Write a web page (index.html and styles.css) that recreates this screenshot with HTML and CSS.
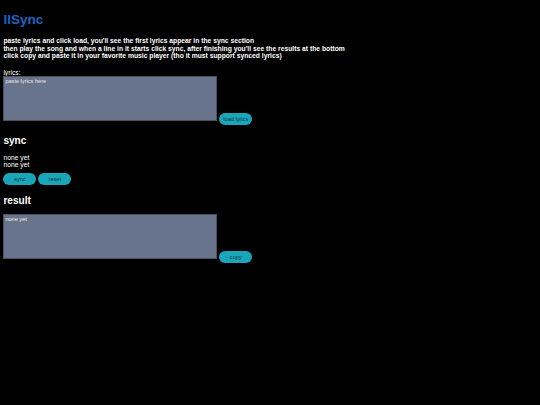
FILE: index.html
```html
<!DOCTYPE html>
<html lang="en">
<head>
<meta charset="utf-8">
<title>llSync</title>
<link rel="stylesheet" href="styles.css">
</head>
<body>
<h1 class="title">llSync</h1>
<h4 class="intro">paste lyrics and click load, you'll see the first lyrics appear in the sync section<br>then play the song and when a line in it starts click sync, after finishing you'll see the results at the bottom<br>click copy and paste it in your favorite music player (tho it must support synced lyrics)</h4>
<label class="label" for="lyrics">lyrics:</label><br>
<textarea class="box" id="lyrics" placeholder="paste lyrics here"></textarea>
<button class="btn">load lyrics</button>
<h2 class="section">sync</h2>
<div class="line">none yet</div>
<div class="line">none yet</div>
<div class="controls"><button class="btn">sync</button> <button class="btn">reset</button></div>
<h2 class="section">result</h2>
<textarea class="box" readonly>none yet</textarea>
<button class="btn">copy</button>
</body>
</html>
```

FILE: styles.css
```css
html {
  background: #000;
}
body {
  margin: 3.375px;
  background: #000;
  color: #fff;
  font-family: "Liberation Sans", Arial, sans-serif;
  font-size: 6.75px;
}
.title {
  color: #1c66c4;
  font-size: 13.5px;
  margin: 9.05px 0 10px;
}
.intro {
  font-size: 6.75px;
  font-weight: bold;
  line-height: 7.5px;
  margin: 10px 0 9.5px;
}
.label {
  font-size: 6.75px;
}
.box {
  box-sizing: border-box;
  width: 214px;
  height: 45px;
  margin: 0;
  padding: 1px;
  background: #68748b;
  color: #f0f0f0;
  border: 0.5px solid #4a5262;
  font-family: "Liberation Sans", Arial, sans-serif;
  font-size: 5.6px;
  resize: none;
  vertical-align: baseline;
}
.box::placeholder {
  color: #e6e8ee;
}
.btn {
  box-sizing: border-box;
  width: 33px;
  height: 12px;
  padding: 0;
  border: none;
  border-radius: 6px;
  background: #1aa5b8;
  color: #0b3440;
  font-family: "Liberation Sans", Arial, sans-serif;
  font-size: 5.6px;
}
.section {
  font-size: 10.1px;
  margin: 9.4px 0 8.4px;
}
.line {
  font-size: 6.75px;
}
.controls {
  margin-top: 5px;
}
```
